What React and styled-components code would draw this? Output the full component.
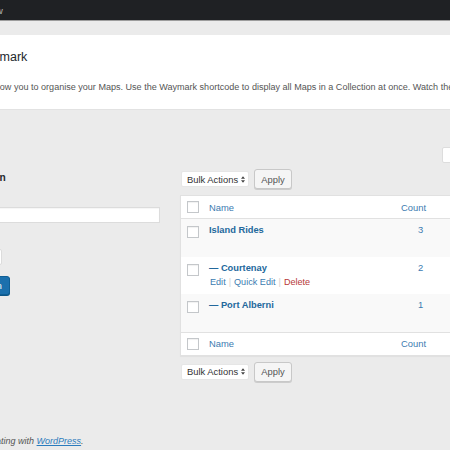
import styled, { createGlobalStyle } from "styled-components";

const GlobalStyle = createGlobalStyle`
  html, body {
    margin: 0;
    padding: 0;
    width: 450px;
    height: 450px;
    overflow: hidden;
    background: #ebebeb;
    font-family: "Liberation Sans", Arial, sans-serif;
    color: #444;
  }
  #root {
    width: 450px;
    height: 450px;
    overflow: hidden;
  }
`;

const rows = [
  { name: "Island Rides", count: 3, shade: true },
  { name: "— Courtenay", count: 2, actions: true },
  { name: "— Port Alberni", count: 1, shade: true },
];

function App() {
  return (
    <>
      <GlobalStyle />
      <Page>
        <AdminBar>
          <BarItem>New</BarItem>
        </AdminBar>
        <HeaderPanel>
          <TitleRow>
            <Logo viewBox="0 0 24 18">
              <path d="M2 16 L7 4 L12 12 L17 4 L22 16" fill="none" stroke="#23282d" strokeWidth="2" />
            </Logo>
            <Title>Waymark</Title>
          </TitleRow>
          <Description>
            Collections allow you to organise your Maps. Use the Waymark shortcode to display all Maps in a Collection at once. Watch the video
          </Description>
        </HeaderPanel>

        <SearchRow>
          <SearchInput />
        </SearchRow>

        <Columns>
          <ColLeft>
            <FormTitle>Add New Collection</FormTitle>
            <Field>
              <Label>Name</Label>
              <TextInput />
            </Field>
            <Field $gap={12}>
              <Label>Parent Collection</Label>
              <ParentSelect>None</ParentSelect>
            </Field>
            <PrimaryButton>Add New Collection</PrimaryButton>
          </ColLeft>

          <ColRight>
            <BulkBar>
              <BulkSelect>
                Bulk Actions
                <Arrows viewBox="0 0 6 10">
                  <path d="M3 0 L6 4 L0 4 Z M3 10 L6 6 L0 6 Z" fill="#444" />
                </Arrows>
              </BulkSelect>
              <ApplyButton>Apply</ApplyButton>
            </BulkBar>

            <Table>
              <HeadRow>
                <CheckCell><Check /></CheckCell>
                <HeadLink>Name</HeadLink>
                <HeadLink>Count</HeadLink>
                <span />
              </HeadRow>
              {rows.map((r) => (
                <BodyRow key={r.name} $shade={r.shade}>
                  <CheckCell $top><Check /></CheckCell>
                  <NameCell>
                    <RowTitle>{r.name}</RowTitle>
                    {r.actions && (
                      <RowActions>
                        <ActionLink>Edit</ActionLink>
                        <Sep>|</Sep>
                        <ActionLink>Quick Edit</ActionLink>
                        <Sep>|</Sep>
                        <ActionLink $danger>Delete</ActionLink>
                      </RowActions>
                    )}
                  </NameCell>
                  <CountCell>{r.count}</CountCell>
                  <span />
                </BodyRow>
              ))}
              <HeadRow $foot>
                <CheckCell><Check /></CheckCell>
                <HeadLink>Name</HeadLink>
                <HeadLink>Count</HeadLink>
                <span />
              </HeadRow>
            </Table>

            <BulkBar $bottom>
              <BulkSelect>
                Bulk Actions
                <Arrows viewBox="0 0 6 10">
                  <path d="M3 0 L6 4 L0 4 Z M3 10 L6 6 L0 6 Z" fill="#444" />
                </Arrows>
              </BulkSelect>
              <ApplyButton>Apply</ApplyButton>
            </BulkBar>
          </ColRight>
        </Columns>

        <Footer>
          Thank you for creating with <FooterLink>WordPress</FooterLink>.
        </Footer>
      </Page>
    </>
  );
}

const Page = styled.div`
  margin-left: -90px;
  width: 800px;
`;

const AdminBar = styled.div`
  height: 20px;
  background: #1f2124;
  border-bottom: 1px solid #9c9c9c;
  display: flex;
  align-items: center;
  padding-left: 74px;
  margin-bottom: 14px;
`;

const BarItem = styled.span`
  font-size: 9.4px;
  color: #bbb;
`;

const HeaderPanel = styled.div`
  background: #fff;
  border-bottom: 1px solid #e2e2e2;
  padding: 13px 0 15px 34px;
  height: 46px;
`;

const TitleRow = styled.div`
  display: flex;
  align-items: center;
  gap: 7px;
  height: 18px;
`;

const Logo = styled.svg`
  width: 24px;
  height: 18px;
`;

const Title = styled.h1`
  margin: 0;
  font-size: 12.5px;
  font-weight: 400;
  color: #23282d;
  line-height: 18px;
`;

const Description = styled.p`
  margin: 14px 0 0;
  font-size: 9.05px;
  line-height: 14px;
  color: #555;
  white-space: nowrap;
`;

const SearchRow = styled.div`
  display: flex;
  padding: 37px 0 0 532px;
`;

const SearchInput = styled.div`
  width: 150px;
  height: 14px;
  background: #fff;
  border: 1px solid #ddd;
  border-radius: 2px;
`;

const Columns = styled.div`
  display: flex;
  gap: 20px;
  align-items: flex-start;
`;

const ColLeft = styled.div`
  width: 250px;
  display: flex;
  flex-direction: column;
  align-items: flex-start;
`;

const FormTitle = styled.h2`
  margin: 8px 0 0;
  font-size: 10.2px;
  line-height: 14px;
  font-weight: 700;
  color: #23282d;
`;

const Field = styled.div`
  margin-top: ${(p) => p.$gap || 8}px;
  display: flex;
  flex-direction: column;
  align-items: stretch;
  align-self: stretch;
`;

const Label = styled.label`
  font-size: 9.4px;
  line-height: 11px;
  margin-bottom: 3px;
  color: #23282d;
`;

const TextInput = styled.div`
  height: 14px;
  background: #fff;
  border: 1px solid #dcdcdc;
  box-shadow: inset 0 1px 1px rgba(0, 0, 0, 0.04);
`;

const ParentSelect = styled.div`
  width: 84px;
  height: 14px;
  padding-left: 6px;
  background: #fff;
  border: 1px solid #dcdcdc;
  border-radius: 2px;
  font-size: 9.4px;
  line-height: 14px;
  color: #444;
`;

const PrimaryButton = styled.button`
  margin-top: 11px;
  height: 19px;
  width: 100px;
  padding: 0;
  border: 1px solid #0f5f95;
  border-radius: 3px;
  background: #1b70ad;
  color: #fff;
  font-family: inherit;
  font-size: 9.6px;
  box-shadow: 0 1px 0 #0d5687;
`;

const ColRight = styled.div`
  width: 420px;
  display: flex;
  flex-direction: column;
`;

const BulkBar = styled.div`
  display: flex;
  align-items: center;
  gap: 5px;
  margin-top: ${(p) => (p.$bottom ? 6 : 6)}px;
  padding-left: 1px;
  height: 20px;
`;

const BulkSelect = styled.div`
  width: 68px;
  height: 16px;
  box-sizing: border-box;
  display: flex;
  align-items: center;
  justify-content: space-between;
  padding: 0 3px 0 5px;
  background: #fff;
  border: 1px solid #e6e6e6;
  border-radius: 2px;
  font-size: 9.4px;
  color: #333;
  white-space: nowrap;
`;

const Arrows = styled.svg`
  width: 4px;
  height: 7px;
`;

const ApplyButton = styled.button`
  width: 38px;
  height: 20px;
  padding: 0;
  border: 1px solid #c8c8c8;
  border-radius: 3px;
  background: #f5f5f5;
  box-shadow: 0 1px 0 #ccc;
  font-family: inherit;
  font-size: 9.4px;
  color: #555;
`;

const Table = styled.div`
  margin-top: 6px;
  background: #fff;
  border: 1px solid #e1e1e1;
  box-shadow: 0 1px 1px rgba(0, 0, 0, 0.04);
`;

const gridCols = `28px 192px 60px 1fr`;

const HeadRow = styled.div`
  display: grid;
  grid-template-columns: ${gridCols};
  align-items: center;
  height: 22px;
  background: #fff;
  border-${(p) => (p.$foot ? "top" : "bottom")}: 1px solid #e1e1e1;
`;

const BodyRow = styled.div`
  display: grid;
  grid-template-columns: ${gridCols};
  align-items: start;
  height: 37.5px;
  background: ${(p) => (p.$shade ? "#f9f9f9" : "#fff")};
`;

const CheckCell = styled.div`
  display: flex;
  padding-left: 6px;
  padding-top: ${(p) => (p.$top ? 7 : 0)}px;
`;

const Check = styled.span`
  width: 10px;
  height: 10px;
  background: #fff;
  border: 1px solid #c4c7ca;
  box-shadow: inset 0 1px 1px rgba(0, 0, 0, 0.06);
`;

const HeadLink = styled.span`
  font-size: 9.4px;
  color: #3b7bb0;
`;

const NameCell = styled.div`
  padding-top: 5px;
`;

const RowTitle = styled.div`
  font-size: 9.3px;
  line-height: 12px;
  font-weight: 700;
  color: #23689c;
`;

const RowActions = styled.div`
  display: flex;
  align-items: center;
  gap: 3px;
  padding-left: 1px;
  line-height: 17px;
  font-size: 9.1px;
`;

const ActionLink = styled.span`
  color: ${(p) => (p.$danger ? "#b73838" : "#3b7bb0")};
`;

const Sep = styled.span`
  color: #d0d0d0;
`;

const CountCell = styled.div`
  padding: 5px 0 0 17px;
  font-size: 9.4px;
  line-height: 12px;
  color: #3b7bb0;
`;

const Footer = styled.p`
  margin: 53px 0 0;
  padding-left: 16px;
  font-size: 9px;
  line-height: 12px;
  font-style: italic;
  color: #555;
`;

const FooterLink = styled.span`
  color: #2b7bbd;
  text-decoration: underline;
`;

export default App;
